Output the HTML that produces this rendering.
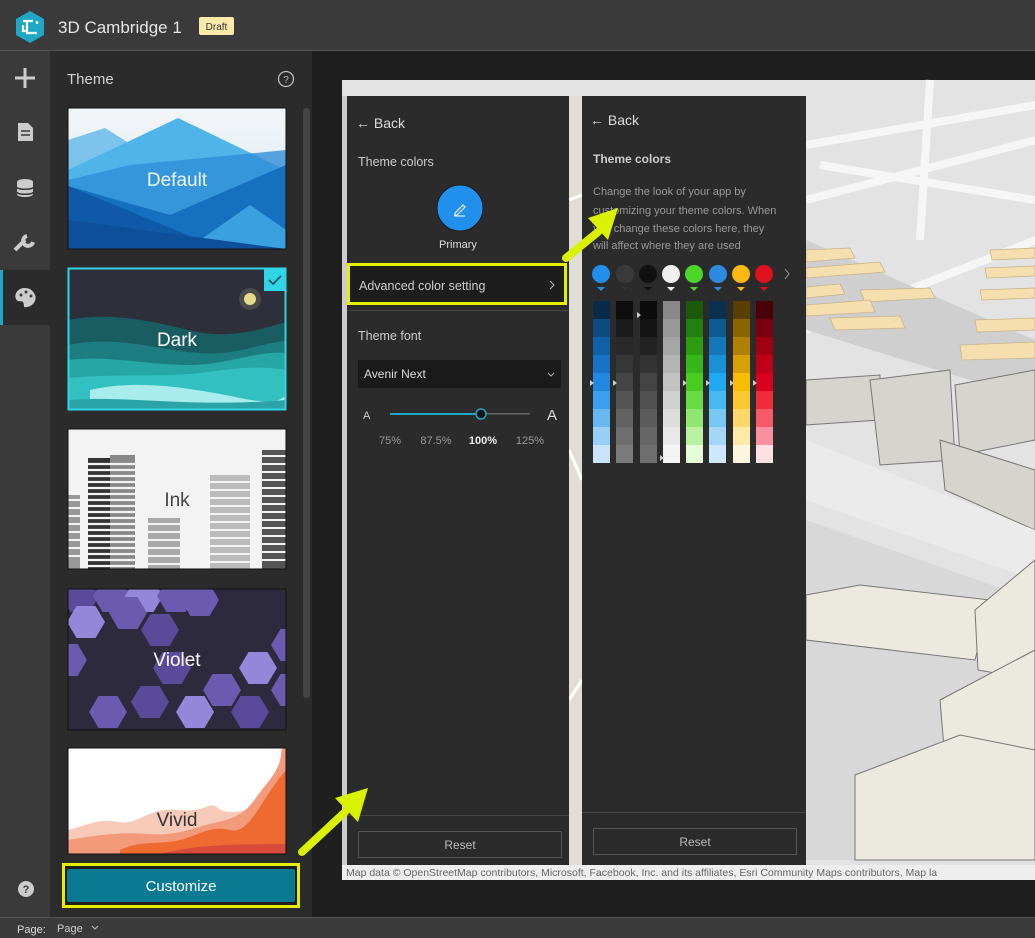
<!DOCTYPE html>
<html><head><meta charset="utf-8"><style>
html,body{margin:0;padding:0;background:#1f1f1f;}
svg{display:block;font-family:"Liberation Sans",sans-serif;}
</style></head><body>
<svg width="1035" height="938" viewBox="0 0 1035 938" xmlns="http://www.w3.org/2000/svg">
<defs>
<polygon id="hx" points="-19,0 -9.5,-16 9.5,-16 19,0 9.5,16 -9.5,16"/>
<clipPath id="cv"><rect x="68" y="589" width="218" height="141"/></clipPath>
<clipPath id="cd"><rect x="68" y="268" width="218" height="142"/></clipPath>
<clipPath id="cdef"><rect x="68" y="108" width="218" height="141"/></clipPath>
<clipPath id="cviv"><rect x="68" y="748" width="218" height="106"/></clipPath>
<clipPath id="cink"><rect x="68" y="429" width="218" height="140"/></clipPath>
<linearGradient id="sky" x1="0" y1="0" x2="0" y2="1"><stop offset="0" stop-color="#f4f6f8"/><stop offset="1" stop-color="#cfe6f4"/></linearGradient>
</defs>
<rect width="1035" height="938" fill="#1f1f1f"/>
<rect x="0" y="0" width="1035" height="50" fill="#3a3a3a"/>
<rect x="0" y="50" width="1035" height="1" fill="#555"/>
<polygon points="30,11 44,19 44,35 30,43 16,35 16,19" fill="#1ea8c6"/>
<path d="M23,21h10M27,21v12h10M37,24v-3M23,25v6h3" stroke="#fff" stroke-width="2.2" fill="none"/>
<text x="58" y="33" fill="#e6e6e6" font-size="17">3D Cambridge 1</text>
<rect x="199" y="17" width="35" height="18" rx="2" fill="#fde9a8"/>
<text x="216.5" y="30" fill="#333" font-size="10" text-anchor="middle">Draft</text>
<rect x="0" y="51" width="50" height="867" fill="#3a3a3a"/>
<rect x="0" y="270" width="50" height="55" fill="#2b2b2b"/>
<rect x="0" y="270" width="3" height="55" fill="#1ea8c6"/>
<path d="M25,68v20M15,78h20" stroke="#ccc" stroke-width="3"/>
<path d="M18,123h10l5,5v13h-15z" fill="#ccc"/><path d="M21,131h9M21,135h9" stroke="#3a3a3a" stroke-width="1.5"/>
<ellipse cx="25" cy="182" rx="8" ry="3" fill="#ccc"/><path d="M17,182v12c0,4 16,4 16,0v-12" fill="#ccc"/><path d="M17,187c0,3 16,3 16,0M17,192c0,3 16,3 16,0" stroke="#3a3a3a" stroke-width="1.5" fill="none"/>
<path d="M15,250l10,-10M27,236a5,5 0 1 0 6,6" stroke="#ccc" stroke-width="4" fill="none"/>
<path d="M25,288c-8,0 -11,7 -9,11c2,4 5,1 7,3c2,3 -1,6 4,5c7,-1 10,-8 8,-12c-2,-5 -6,-7 -10,-7z" fill="#ccc"/>
<circle cx="21" cy="295" r="1.5" fill="#3a3a3a"/><circle cx="26" cy="292" r="1.5" fill="#3a3a3a"/><circle cx="31" cy="296" r="1.5" fill="#3a3a3a"/>
<circle cx="26" cy="889" r="8" fill="#ccc"/><text x="26" y="893" fill="#3a3a3a" font-size="11" font-weight="bold" text-anchor="middle">?</text>
<rect x="50" y="51" width="262" height="867" fill="#2b2b2b"/>
<text x="67" y="84" fill="#d4d4d4" font-size="15">Theme</text>
<circle cx="286" cy="79" r="7.5" fill="none" stroke="#bbb" stroke-width="1.3"/><text x="286" y="83" fill="#bbb" font-size="10" text-anchor="middle">?</text>
<rect x="303" y="108" width="7" height="590" rx="3" fill="#444"/>
<g clip-path="url(#cdef)">
<rect x="68" y="108" width="218" height="141" fill="url(#sky)"/>
<polygon points="68,140 105,128 140,150 68,170" fill="#7cc4ec"/>
<polygon points="68,170 178,118 286,170 286,249 68,249" fill="#4fb4e8"/>
<polygon points="68,180 130,165 286,150 286,249 68,249" fill="#2f8fd8" opacity=".8"/>
<polygon points="68,186 170,215 286,165 286,249 68,249" fill="#1670c0"/>
<polygon points="68,186 200,240 68,249" fill="#0f5aa8"/>
<polygon points="200,240 250,205 286,230 286,249" fill="#3aa0e0"/>
<polygon points="68,220 286,249 68,249" fill="#0d4f98"/>
</g>
<rect x="68" y="108" width="218" height="141" fill="none" stroke="#111" stroke-width="1"/>
<text x="177" y="186" fill="#eef6fc" font-size="19" text-anchor="middle">Default</text>
<g clip-path="url(#cd)">
<rect x="68" y="268" width="218" height="142" fill="#2d2f3a"/>
<circle cx="250" cy="299" r="11" fill="#4a4a4a"/><circle cx="250" cy="299" r="6" fill="#e8d88a"/>
<path d="M68,320c40,-8 80,0 120,10s70,0 98,-8v90h-218z" fill="#195d62"/>
<path d="M68,345c50,-10 90,5 130,8s60,-10 88,-12v70h-218z" fill="#1c7c80"/>
<path d="M68,360c40,-5 80,5 120,5s70,-15 98,-12v60h-218z" fill="#27a6a6"/>
<path d="M68,378c50,-5 100,0 140,-6s60,-5 78,-2v42h-218z" fill="#33c0c0"/>
<path d="M90,390c50,-12 110,0 150,8s40,0 46,-2v16h-196z" fill="#a8ecee"/>
<path d="M68,400c60,-5 120,8 218,0v12h-218z" fill="#2aa4a6"/>
</g>
<rect x="68.5" y="268.5" width="217" height="141" fill="none" stroke="#2fd4e6" stroke-width="2"/>
<rect x="264" y="269" width="22" height="22" fill="#2fd4e6"/>
<path d="M269,280l4,4l8,-8" stroke="#1a3a40" stroke-width="1.5" fill="none"/>
<text x="177" y="346" fill="#fff" font-size="19" text-anchor="middle">Dark</text>
<g clip-path="url(#cink)">
<rect x="68" y="429" width="218" height="140" fill="#f3f3f3"/>
<rect x="88" y="458" width="22" height="112" fill="#333"/>
<rect x="110" y="455" width="25" height="115" fill="#888"/>
<g stroke="#f3f3f3" stroke-width="2.2"><path d="M88,464h47M88,470h47M88,476h47M88,482h47M88,488h47M88,494h47M88,500h47M88,506h47M88,512h47M88,518h47M88,524h47M88,530h47M88,536h47M88,542h47M88,548h47M88,554h47M88,560h47M88,566h47"/></g>
<rect x="68" y="495" width="12" height="75" fill="#999"/>
<rect x="148" y="518" width="32" height="52" fill="#aaa"/>
<rect x="210" y="475" width="40" height="95" fill="#bbb"/>
<rect x="262" y="450" width="24" height="120" fill="#555"/>
<g stroke="#f3f3f3" stroke-width="2"><path d="M68,500h12M68,508h12M68,516h12M68,524h12M68,532h12M68,540h12M68,548h12M68,556h12M148,524h32M148,532h32M148,540h32M148,548h32M148,556h32M148,564h32M210,482h40M210,490h40M210,498h40M210,506h40M210,514h40M210,522h40M210,530h40M210,538h40M210,546h40M210,554h40M210,562h40M262,456h24M262,464h24M262,472h24M262,480h24M262,488h24M262,496h24M262,504h24M262,512h24M262,520h24M262,528h24M262,536h24M262,544h24M262,552h24M262,560h24"/></g>
</g>
<rect x="68" y="429" width="218" height="140" fill="none" stroke="#111"/>
<text x="177" y="506" fill="#444" font-size="19" text-anchor="middle">Ink</text>
<rect x="68" y="589" width="218" height="141" fill="#2c2a3c"/>
<g clip-path="url(#cv)">
<use href="#hx" x="80" y="596" fill="#5a4a9a"/><use href="#hx" x="112" y="596" fill="#6a5ab0"/><use href="#hx" x="144" y="596" fill="#9486d8"/><use href="#hx" x="176" y="596" fill="#6a5ab0"/><use href="#hx" x="200" y="600" fill="#6a5ab0"/>
<use href="#hx" x="86" y="622" fill="#9486d8"/><use href="#hx" x="128" y="613" fill="#6a5ab0"/><use href="#hx" x="160" y="630" fill="#5a4a9a"/><use href="#hx" x="68" y="660" fill="#6a5ab0"/>
<use href="#hx" x="172" y="668" fill="#5a4a9a"/><use href="#hx" x="150" y="702" fill="#5a4a9a"/><use href="#hx" x="195" y="712" fill="#9486d8"/><use href="#hx" x="222" y="690" fill="#6a5ab0"/><use href="#hx" x="258" y="668" fill="#9486d8"/><use href="#hx" x="290" y="645" fill="#6a5ab0"/><use href="#hx" x="108" y="712" fill="#6a5ab0"/><use href="#hx" x="250" y="712" fill="#5a4a9a"/><use href="#hx" x="290" y="690" fill="#6a5ab0"/>
</g>
<rect x="68" y="589" width="218" height="141" fill="none" stroke="#111"/>
<text x="177" y="666" fill="#fff" font-size="19" text-anchor="middle">Violet</text>
<g clip-path="url(#cviv)">
<rect x="68" y="748" width="218" height="106" fill="#fff"/>
<path d="M68,830c20,-5 30,-12 50,-8s30,-15 60,-12s30,-10 40,-2s40,5 60,-20v70h-218z" fill="#f7c9b8"/>
<path d="M68,840c30,-5 50,-8 80,-6s40,-5 70,-12s30,-15 50,-40s8,-30 18,-40v120h-218z" fill="#f29a7a"/>
<path d="M120,850c20,-10 40,-5 60,-10s30,-15 50,-10s30,-30 56,-60v90h-166z" fill="#ee6a30"/>
<path d="M160,854c30,-8 60,-10 126,-10v10z" fill="#d84a3a"/>
</g>
<rect x="68" y="748" width="218" height="106" fill="none" stroke="#111"/>
<text x="177" y="826" fill="#333" font-size="19" text-anchor="middle">Vivid</text>
<rect x="62" y="863" width="238" height="45" fill="#e2f000"/>
<rect x="65" y="866" width="232" height="39" fill="#1d1d1d"/>
<rect x="67" y="869" width="228" height="33" rx="2" fill="#0a7a92"/>
<text x="181" y="891" fill="#fff" font-size="15" text-anchor="middle">Customize</text>
<rect x="0" y="918" width="1035" height="20" fill="#3a3a3a"/>
<rect x="0" y="917" width="1035" height="1" fill="#555"/>
<text x="17" y="933" fill="#ddd" font-size="11">Page:</text>
<text x="57" y="932" fill="#ccc" font-size="11">Page</text>
<path d="M92,926l3,3l3,-3" stroke="#bbb" fill="none"/>
<rect x="342" y="80" width="693" height="800" fill="#e3e3e3"/>
<path d="M806,145l230,-40M820,165l215,35M806,200l230,-60M930,80l-10,160M806,330l230,-90" stroke="#f6f6f6" stroke-width="8" fill="none"/>
<polygon points="806,240 1035,340 1035,400 806,330" fill="#cfcfcf"/>
<g fill="#f6dfae" stroke="#c9b38a" stroke-width=".8">
<polygon points="806,250 850,248 855,258 806,262"/><polygon points="806,268 880,262 885,272 806,278"/><polygon points="806,287 840,284 845,294 806,298"/><polygon points="860,290 930,288 935,298 865,302"/><polygon points="806,305 870,300 875,312 806,316"/><polygon points="830,318 900,316 905,328 835,330"/><polygon points="990,250 1035,248 1035,258 992,260"/><polygon points="985,268 1035,266 1035,276 987,278"/><polygon points="980,290 1035,288 1035,298 982,300"/><polygon points="960,345 1035,342 1035,358 962,360"/><polygon points="975,320 1035,318 1035,330 977,332"/>
</g>
<g fill="#d6d4cf" stroke="#777" stroke-width="1">
<polygon points="806,380 880,375 880,420 806,425"/><polygon points="870,380 950,370 955,460 880,465"/><polygon points="955,385 1035,370 1035,440 960,455"/><polygon points="940,440 1035,470 1035,530 945,490"/>
</g>
<polygon points="806,440 1035,530 1035,580 806,500" fill="#ebebeb"/>
<polygon points="806,520 1035,600 1035,860 806,860" fill="#d8d8d8"/>
<g fill="#ece9e0" stroke="#777" stroke-width="1">
<polygon points="806,595 860,585 990,600 975,660 806,640"/><polygon points="975,610 1035,560 1035,680 978,670"/><polygon points="940,700 1035,650 1035,760 945,760"/><polygon points="855,775 960,735 1035,750 1035,860 855,860"/>
</g>
<rect x="342" y="96" width="5" height="770" fill="#ccc"/>
<rect x="569" y="96" width="13" height="770" fill="#e0ddd6"/>
<path d="M569,200l13,-5M569,450l13,30M569,700l13,-20" stroke="#fff" stroke-width="3"/>
<rect x="342" y="865" width="693" height="15" fill="#eeeeee"/>
<text x="346" y="876" fill="#666" font-size="10.5">Map data © OpenStreetMap contributors, Microsoft, Facebook, Inc. and its affiliates, Esri Community Maps contributors, Map la</text>
<rect x="347" y="96" width="222" height="769" fill="#2b2b2b"/>
<text x="356" y="128" fill="#ddd" font-size="14">← Back</text>
<text x="358" y="166" fill="#ccc" font-size="12.5">Theme colors</text>
<circle cx="460" cy="208" r="23" fill="#2190ec" stroke="#1a1a1a" stroke-width="1"/>
<path d="M455,213l8,-8l2,2l-8,8h-2z M454,216h11" stroke="#fff" stroke-width="1" fill="none"/>
<text x="458" y="248" fill="#ddd" font-size="11" text-anchor="middle">Primary</text>
<rect x="348.5" y="264.5" width="217" height="39" fill="none" stroke="#e2f000" stroke-width="3"/>
<rect x="350" y="266" width="214" height="36" fill="#1d1d1d"/>
<text x="359" y="290" fill="#ccc" font-size="12.5">Advanced color setting</text>
<path d="M550,281l4,4l-4,4" stroke="#bbb" fill="none"/>
<rect x="347" y="310" width="222" height="1" fill="#444"/>
<text x="358" y="340" fill="#ccc" font-size="12.5">Theme font</text>
<rect x="358" y="360" width="203" height="28" fill="#1a1a1a"/>
<text x="364" y="378" fill="#ddd" font-size="12">Avenir Next</text>
<path d="M548,373l3,3l3,-3" stroke="#aaa" fill="none"/>
<text x="363" y="419" fill="#ccc" font-size="11">A</text>
<text x="547" y="420" fill="#ddd" font-size="15">A</text>
<rect x="390" y="413" width="91" height="2" fill="#1ea8c6"/><rect x="481" y="413" width="49" height="1.5" fill="#666"/>
<circle cx="481" cy="414" r="5" fill="#111" stroke="#1ea8c6" stroke-width="1.5"/>
<text x="390" y="444" fill="#999" font-size="11" text-anchor="middle">75%</text>
<text x="436" y="444" fill="#999" font-size="11" text-anchor="middle">87.5%</text>
<text x="483" y="444" fill="#eee" font-size="11" font-weight="bold" text-anchor="middle">100%</text>
<text x="530" y="444" fill="#999" font-size="11" text-anchor="middle">125%</text>
<rect x="347" y="815" width="222" height="1" fill="#444"/>
<rect x="358.5" y="831.5" width="203" height="26" fill="#2b2b2b" stroke="#555"/>
<text x="460" y="849" fill="#bbb" font-size="12" text-anchor="middle">Reset</text>
<rect x="582" y="96" width="224" height="769" fill="#2b2b2b"/>
<text x="590" y="125" fill="#ddd" font-size="14">← Back</text>
<text x="593" y="163" fill="#ccc" font-size="12" font-weight="bold">Theme colors</text>
<g fill="#999" font-size="11"><text x="593" y="195">Change the look of your app by</text><text x="593" y="214">customizing your theme colors. When</text><text x="593" y="232">you change these colors here, they</text><text x="593" y="249">will affect where they are used</text></g>
<g>
<circle cx="601" cy="274" r="9" fill="#2190ec"/><circle cx="625" cy="274" r="9" fill="#3a3a3a"/><circle cx="648" cy="274" r="9" fill="#111"/><circle cx="671" cy="274" r="9" fill="#f0f0f0"/><circle cx="694" cy="274" r="9" fill="#4cd62a"/><circle cx="718" cy="274" r="9" fill="#2d8ae0"/><circle cx="741" cy="274" r="9" fill="#fcb810"/><circle cx="764" cy="274" r="9" fill="#e0101c"/>
<path d="M597,287h8l-4,4z" fill="#2190ec"/><path d="M621,287h8l-4,4z" fill="#333"/><path d="M644,287h8l-4,4z" fill="#111"/><path d="M667,287h8l-4,4z" fill="#eee"/><path d="M690,287h8l-4,4z" fill="#4cd62a"/><path d="M714,287h8l-4,4z" fill="#2d8ae0"/><path d="M737,287h8l-4,4z" fill="#fcb810"/><path d="M760,287h8l-4,4z" fill="#e0101c"/>
<path d="M785,269l4,5l-4,5" stroke="#999" fill="none"/>
</g>
<g transform="translate(593,301)"><rect y="0" width="17" height="18" fill="#0a2a4a"/><rect y="18" width="17" height="18" fill="#0c4a80"/><rect y="36" width="17" height="18" fill="#1060a8"/><rect y="54" width="17" height="18" fill="#1872c8"/><rect y="72" width="17" height="18" fill="#2088e0"/><rect y="90" width="17" height="18" fill="#3aa0ee"/><rect y="108" width="17" height="18" fill="#68b8f2"/><rect y="126" width="17" height="18" fill="#98cff6"/><rect y="144" width="17" height="18" fill="#c8e4fa"/></g>
<g transform="translate(616,301)"><rect y="0" width="17" height="18" fill="#0e0e0e"/><rect y="18" width="17" height="18" fill="#1a1a1a"/><rect y="36" width="17" height="18" fill="#282828"/><rect y="54" width="17" height="18" fill="#363636"/><rect y="72" width="17" height="18" fill="#444"/><rect y="90" width="17" height="18" fill="#555"/><rect y="108" width="17" height="18" fill="#626262"/><rect y="126" width="17" height="18" fill="#6e6e6e"/><rect y="144" width="17" height="18" fill="#7a7a7a"/></g>
<g transform="translate(640,301)"><rect y="0" width="17" height="18" fill="#0b0b0b"/><rect y="18" width="17" height="18" fill="#141414"/><rect y="36" width="17" height="18" fill="#222"/><rect y="54" width="17" height="18" fill="#333"/><rect y="72" width="17" height="18" fill="#444"/><rect y="90" width="17" height="18" fill="#505050"/><rect y="108" width="17" height="18" fill="#5c5c5c"/><rect y="126" width="17" height="18" fill="#666"/><rect y="144" width="17" height="18" fill="#6e6e6e"/></g>
<g transform="translate(663,301)"><rect y="0" width="17" height="18" fill="#888"/><rect y="18" width="17" height="18" fill="#999"/><rect y="36" width="17" height="18" fill="#a6a6a6"/><rect y="54" width="17" height="18" fill="#b4b4b4"/><rect y="72" width="17" height="18" fill="#c2c2c2"/><rect y="90" width="17" height="18" fill="#d0d0d0"/><rect y="108" width="17" height="18" fill="#ddd"/><rect y="126" width="17" height="18" fill="#e8e8e8"/><rect y="144" width="17" height="18" fill="#f4f4f4"/></g>
<g transform="translate(686,301)"><rect y="0" width="17" height="18" fill="#1a5a08"/><rect y="18" width="17" height="18" fill="#228010"/><rect y="36" width="17" height="18" fill="#2c9c10"/><rect y="54" width="17" height="18" fill="#38b818"/><rect y="72" width="17" height="18" fill="#48cc20"/><rect y="90" width="17" height="18" fill="#66dd40"/><rect y="108" width="17" height="18" fill="#8ee870"/><rect y="126" width="17" height="18" fill="#b8f2a0"/><rect y="144" width="17" height="18" fill="#e4fcd8"/></g>
<g transform="translate(709,301)"><rect y="0" width="17" height="18" fill="#0a3050"/><rect y="18" width="17" height="18" fill="#0c5a90"/><rect y="36" width="17" height="18" fill="#1478b8"/><rect y="54" width="17" height="18" fill="#1a90d8"/><rect y="72" width="17" height="18" fill="#20a8f0"/><rect y="90" width="17" height="18" fill="#48b8f4"/><rect y="108" width="17" height="18" fill="#78c8f4"/><rect y="126" width="17" height="18" fill="#a4d8f6"/><rect y="144" width="17" height="18" fill="#cce8fa"/></g>
<g transform="translate(733,301)"><rect y="0" width="17" height="18" fill="#5a4000"/><rect y="18" width="17" height="18" fill="#8a6400"/><rect y="36" width="17" height="18" fill="#b08000"/><rect y="54" width="17" height="18" fill="#d8a000"/><rect y="72" width="17" height="18" fill="#f8bc00"/><rect y="90" width="17" height="18" fill="#fcc830"/><rect y="108" width="17" height="18" fill="#fdd868"/><rect y="126" width="17" height="18" fill="#feeaa8"/><rect y="144" width="17" height="18" fill="#fff6e0"/></g>
<g transform="translate(756,301)"><rect y="0" width="17" height="18" fill="#4a0008"/><rect y="18" width="17" height="18" fill="#7a0010"/><rect y="36" width="17" height="18" fill="#a00014"/><rect y="54" width="17" height="18" fill="#c00018"/><rect y="72" width="17" height="18" fill="#d8001c"/><rect y="90" width="17" height="18" fill="#f02c3c"/><rect y="108" width="17" height="18" fill="#f65a68"/><rect y="126" width="17" height="18" fill="#f890a0"/><rect y="144" width="17" height="18" fill="#fce0e4"/></g>
<g fill="#ccc"><path d="M590,380l4,3l-4,3z"/><path d="M613,380l4,3l-4,3z"/><path d="M637,312l4,3l-4,3z"/><path d="M660,455l4,3l-4,3z"/><path d="M683,380l4,3l-4,3z"/><path d="M706,380l4,3l-4,3z"/><path d="M730,380l4,3l-4,3z"/><path d="M753,380l4,3l-4,3z"/></g>
<rect x="582" y="812" width="224" height="1" fill="#444"/>
<rect x="593.5" y="828.5" width="203" height="26" fill="#2b2b2b" stroke="#555"/>
<text x="695" y="846" fill="#bbb" font-size="12" text-anchor="middle">Reset</text>
<g stroke="#d8f200" stroke-width="8" stroke-linecap="round" fill="#d8f200">
<path d="M302,852L345,812"/><path d="M566,258L598,232"/>
</g>
<polygon points="335,798 368,788 358,822" fill="#d8f200"/>
<polygon points="588,218 618,208 608,240" fill="#d8f200"/>
</svg>
</body></html>
